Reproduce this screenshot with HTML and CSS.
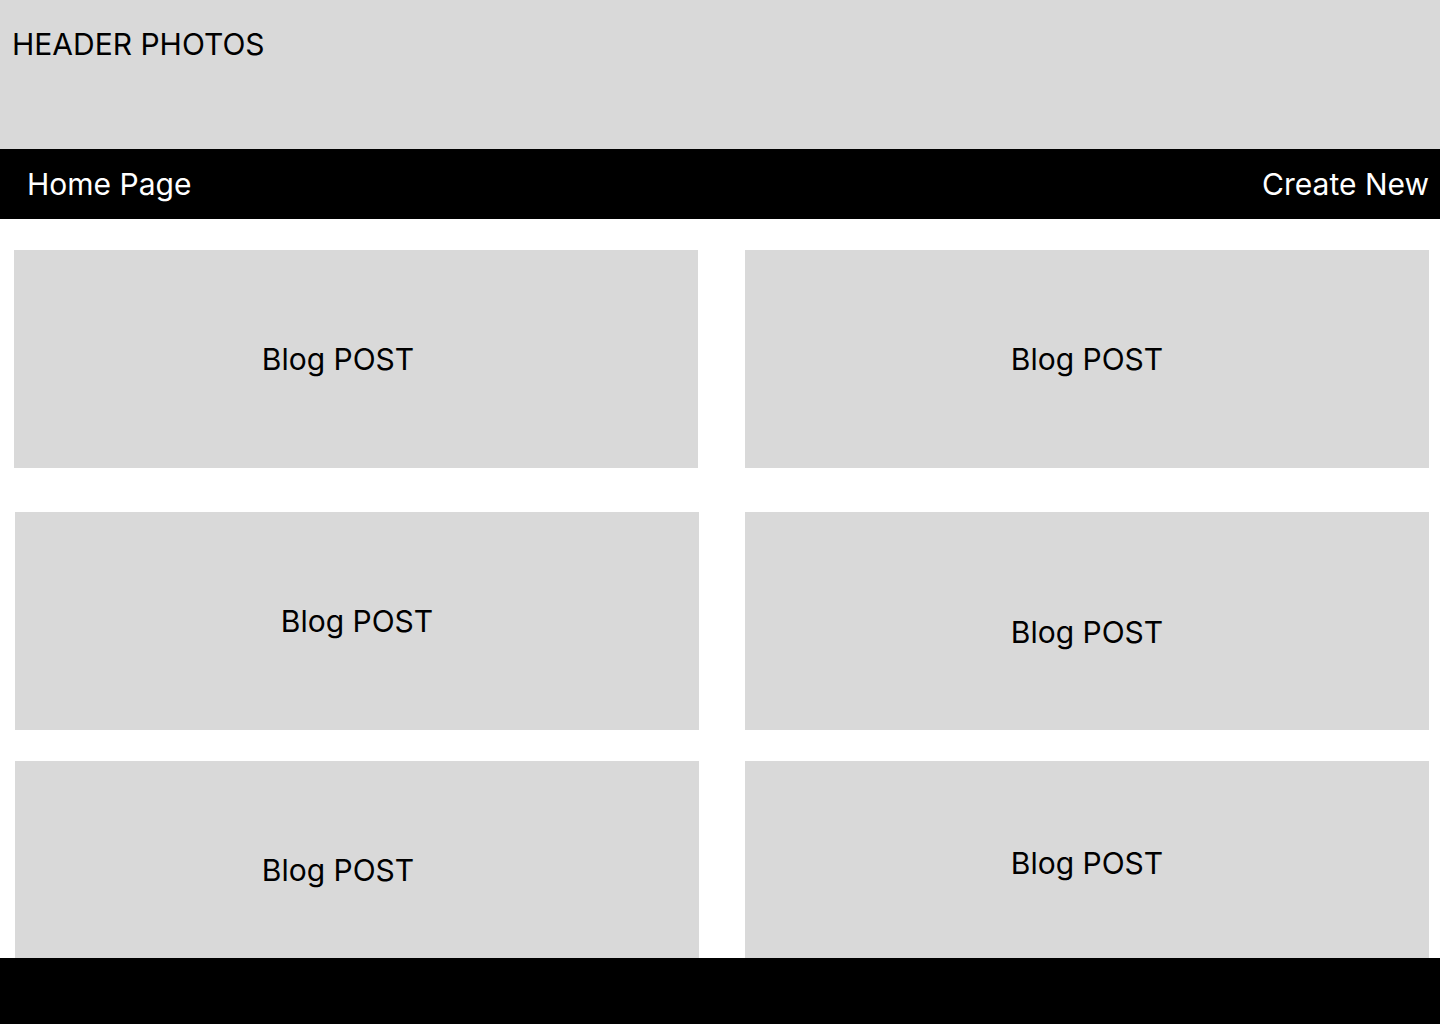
FILE: index.html
```html
<!DOCTYPE html>
<html>

<head>
     <title>Blog</title>
     <link rel="stylesheet" href="styles.css">
</head>

<body>
     <div class="header">HEADER PHOTOS</div>

     <div class="nav">
          <span class="nav-link">Home Page</span>
          <span class="nav-link">Create New</span>
     </div>

     <div class="main">
          <div class="posts">
               <div class="post row-1 shift-left">Blog POST</div>
               <div class="post row-1">Blog POST</div>
               <div class="post row-2 nudge">Blog POST</div>
               <div class="post row-2 lower">Blog POST</div>
               <div class="post row-3 nudge shift-left-2">Blog POST</div>
               <div class="post row-3 higher">Blog POST</div>
          </div>
     </div>

     <div class="footer"></div>
</body>

</html>
```

FILE: styles.css
```css
body {
     margin: 0;
     font-family: Inter, "Noto Sans", sans-serif;
     background-color: #fff;
     height: 1024px;
     display: flex;
     flex-direction: column;
     overflow: hidden;
}

.header {
     height: 149px;
     box-sizing: border-box;
     background-color: #d9d9d9;
     color: #000;
     font-size: 30px;
     line-height: 36px;
     padding: 26px 0 0 12px;
}

.nav {
     height: 70px;
     box-sizing: border-box;
     background-color: #000;
     color: #fff;
     display: flex;
     justify-content: space-between;
     align-items: center;
     padding: 0 11px 0 27px;
     font-size: 30px;
     line-height: 36px;
}

.main {
     flex: 1;
     overflow: hidden;
     padding: 31px 0 0 14px;
}

.posts {
     display: grid;
     grid-template-columns: 684px 684px;
     column-gap: 47px;
}

.post {
     height: 218px;
     box-sizing: border-box;
     background-color: #d9d9d9;
     display: flex;
     align-items: center;
     justify-content: center;
     font-size: 30px;
     line-height: 36px;
     color: #000;
}

.row-2 {
     margin-top: 44px;
}

.row-3 {
     margin-top: 31px;
}

.nudge {
     margin-left: 1px;
     margin-right: -1px;
}

.shift-left {
     padding-right: 36px;
}

.shift-left-2 {
     padding-right: 38px;
}

.lower {
     padding-top: 22px;
}

.higher {
     padding-bottom: 14px;
}

.footer {
     height: 66px;
     background-color: #000;
}
```
